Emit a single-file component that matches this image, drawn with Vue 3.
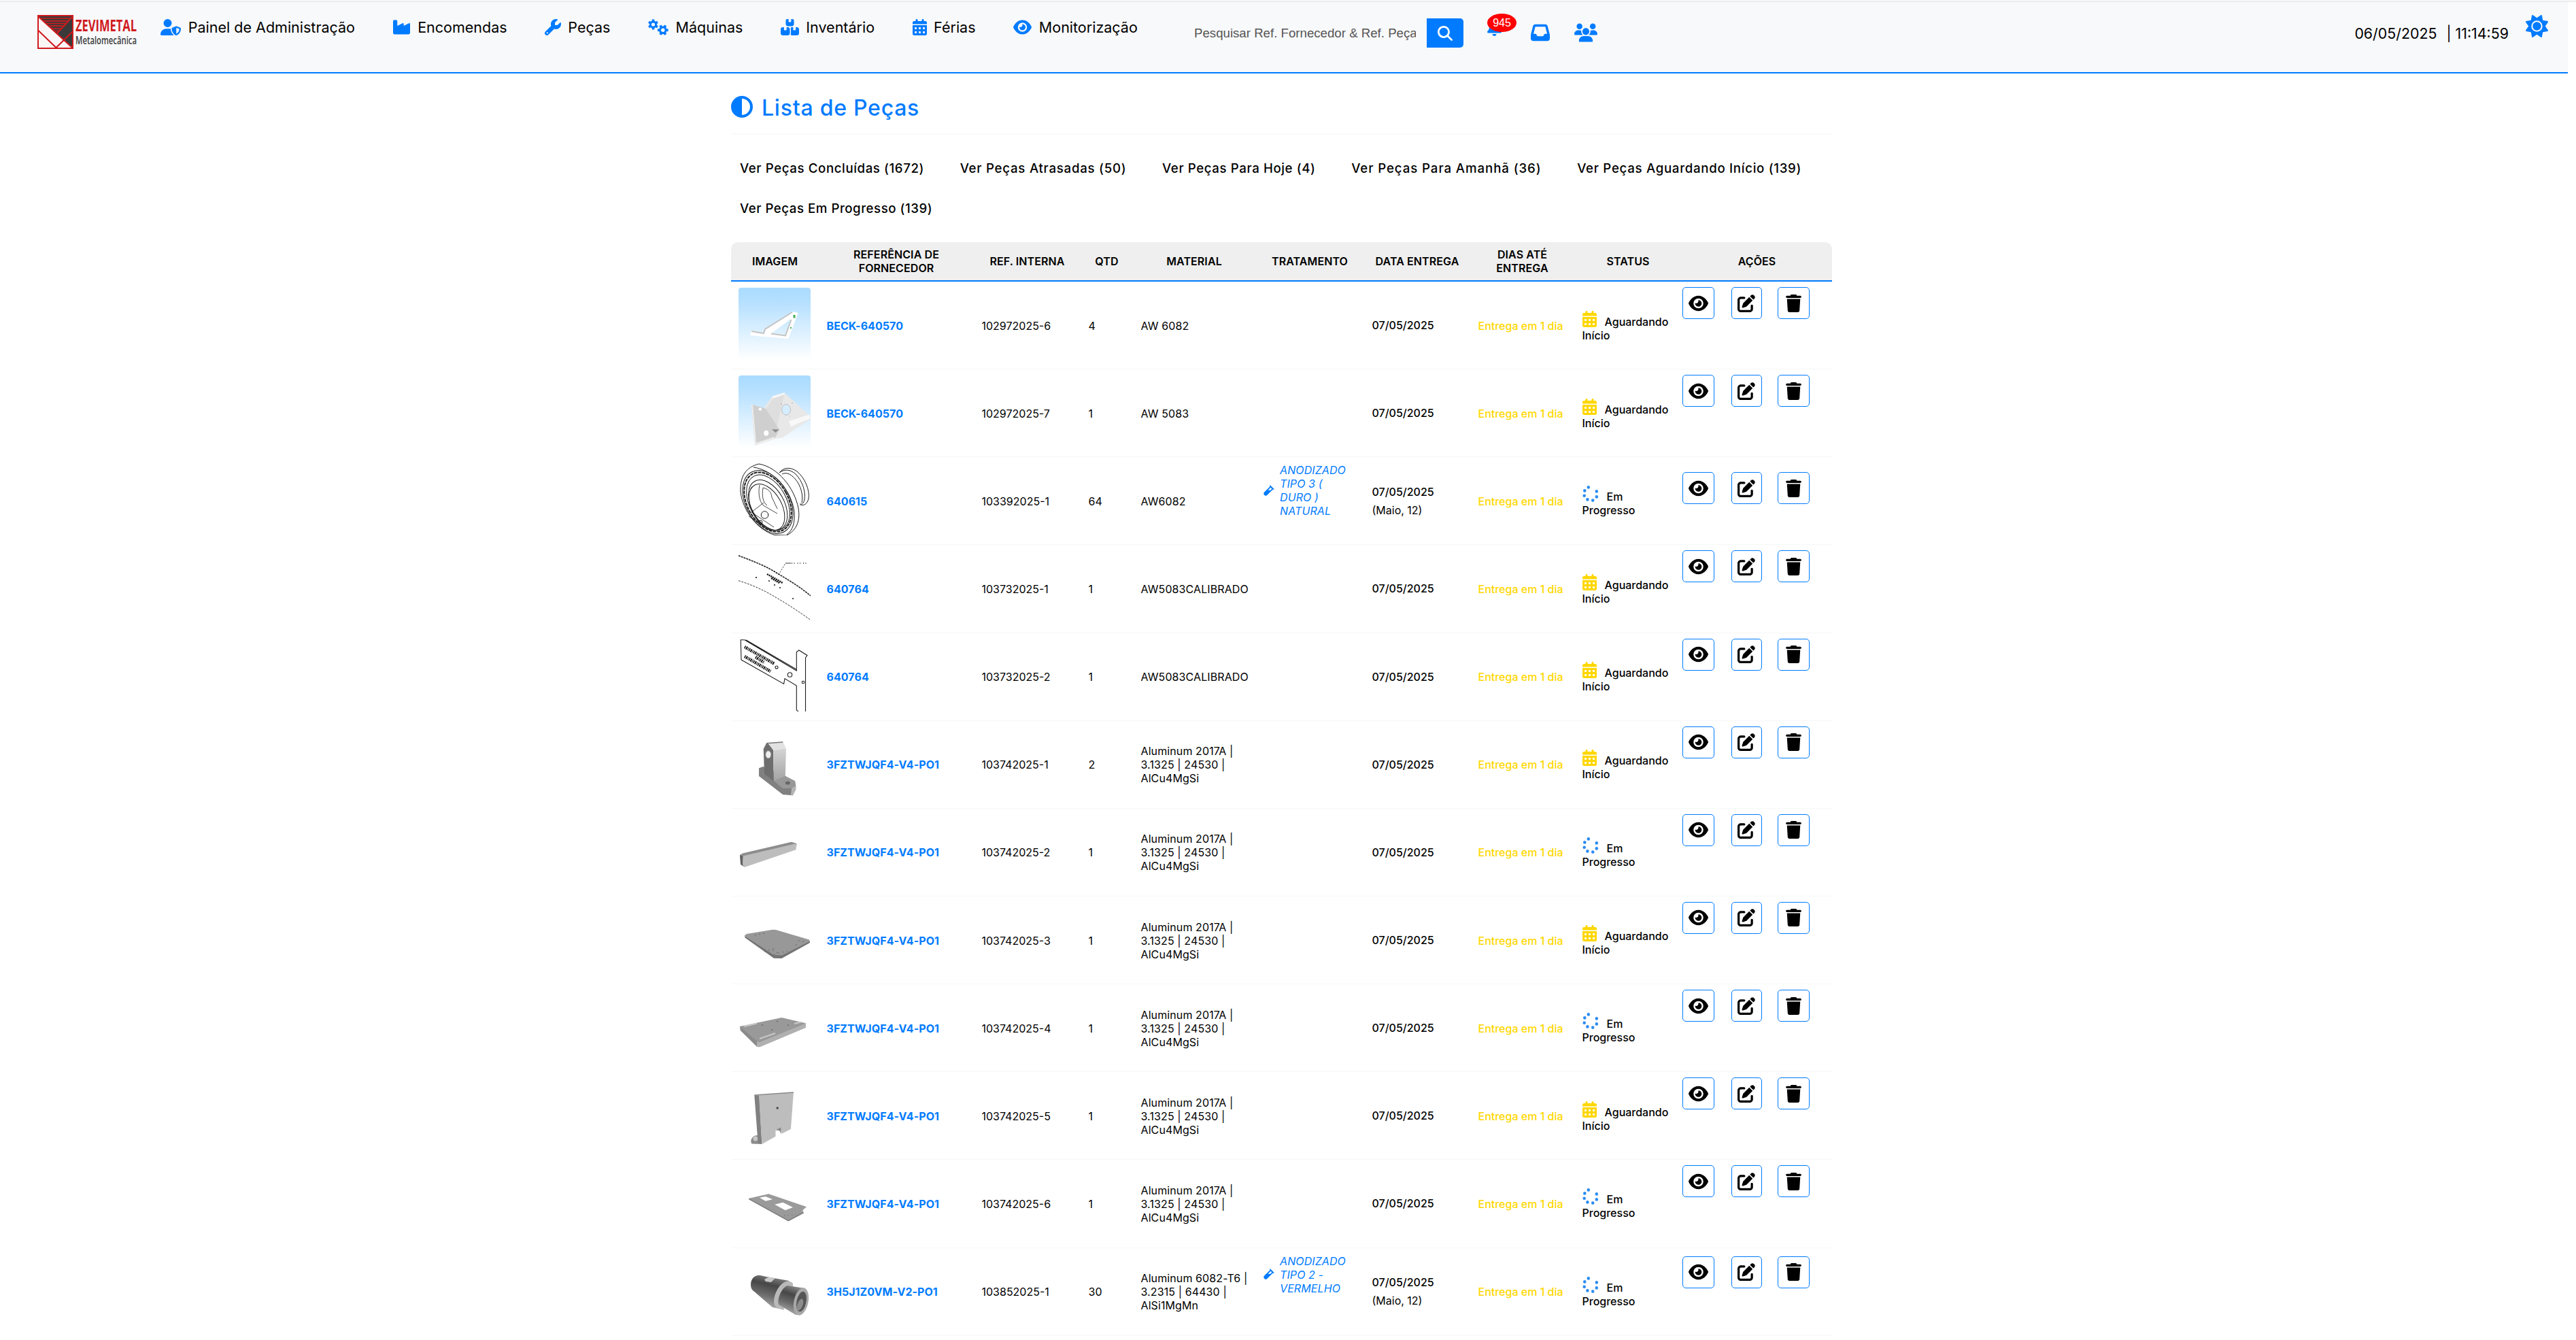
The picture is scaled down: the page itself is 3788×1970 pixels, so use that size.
<script setup>
const gear = (cx, cy, r, rot) => {
  const pts = []
  for (let i = 0; i < 6; i++) {
    const a = rot + (i * Math.PI) / 3
    for (const [d, k] of [[-0.36, 0.72], [-0.22, 1], [0.22, 1], [0.36, 0.72]]) {
      pts.push(`${(cx + r * k * Math.cos(a + d)).toFixed(2)} ${(cy + r * k * Math.sin(a + d)).toFixed(2)}`)
    }
  }
  const h = r * 0.34
  return `M${pts.join('L')}ZM${cx - h} ${cy}a${h} ${h} 0 1 0 ${2 * h} 0a${h} ${h} 0 1 0 ${-2 * h} 0Z`
}

const dot = (x, y, r = 2.3) => `M${12 + x - r} ${12 + y}a${r} ${r} 0 1 0 ${2 * r} 0a${r} ${r} 0 1 0 ${-2 * r} 0Z`

const icons = {
  shield: ['0 0 640 512', 'M224 256A128 128 0 1 0 224 0a128 128 0 1 0 0 256zm-45.7 48C79.8 304 0 383.8 0 482.3C0 498.7 13.3 512 29.7 512H418.3c1.8 0 3.5-.2 5.3-.5c-76.3-55.1-99.8-141-103.1-200.2c-16.1-4.8-33.1-7.3-50.7-7.3H178.3zm308.8-78.3l-120 48C358 277.4 352 286.2 352 296c0 63.3 25.9 168.8 134.8 214.2c5.9 2.5 12.6 2.5 18.5 0C614.1 464.8 640 359.3 640 296c0-9.8-6-18.6-15.1-22.3l-120-48c-5.7-2.3-12.1-2.3-17.8 0zM591.4 312c-3.9 50.7-27.2 116.7-95.4 149.7V273.8L591.4 312z'],
  industry: ['0 0 512 512', 'M32 32C14.3 32 0 46.3 0 64V304v48 80c0 26.5 21.5 48 48 48H464c26.5 0 48-21.5 48-48V304 152.2c0-18.2-19.4-29.7-35.4-21.1L320 215.4V152.2c0-18.2-19.4-29.7-35.4-21.1L128 215.4V64c0-17.7-14.3-32-32-32H32z'],
  wrench: ['0 0 512 512', 'M352 320c88.4 0 160-71.6 160-160c0-15.3-2.2-30.1-6.2-44.2c-3.1-10.8-16.4-13.2-24.3-5.3l-76.8 76.8c-3 3-7.1 4.7-11.3 4.7H336c-8.8 0-16-7.2-16-16V118.6c0-4.2 1.7-8.3 4.7-11.3l76.8-76.8c7.9-7.9 5.4-21.2-5.3-24.3C382.1 2.2 367.3 0 352 0C263.6 0 192 71.6 192 160c0 19.1 3.4 37.5 9.5 54.5L19.9 396.1C7.2 408.8 0 426.1 0 444.1C0 481.6 30.4 512 67.9 512c18 0 35.3-7.2 48-19.9L297.5 310.5c17 6.2 35.4 9.5 54.5 9.5zM80 408a24 24 0 1 1 0 48 24 24 0 1 1 0-48z'],
  gears: ['0 0 30 24', gear(7.5, 8, 7.7, Math.PI / 6) + gear(21.8, 16.2, 8, 0)],
  boxes: ['0 0 576 512', 'M248 0H208c-26.5 0-48 21.5-48 48V160c0 35.3 28.7 64 64 64H352c35.3 0 64-28.7 64-64V48c0-26.5-21.5-48-48-48H328V80c0 8.8-7.2 16-16 16H264c-8.8 0-16-7.2-16-16V0zM64 256c-35.3 0-64 28.7-64 64V448c0 35.3 28.7 64 64 64H224c35.3 0 64-28.7 64-64V320c0-35.3-28.7-64-64-64H184v80c0 8.8-7.2 16-16 16H120c-8.8 0-16-7.2-16-16V256H64zM352 512H512c35.3 0 64-28.7 64-64V320c0-35.3-28.7-64-64-64H472v80c0 8.8-7.2 16-16 16H408c-8.8 0-16-7.2-16-16V256H352c-15 0-28.8 5.1-39.7 13.8c4.9 10.4 7.7 22 7.7 34.2V464c0 12.2-2.8 23.8-7.7 34.2C323.2 506.9 337 512 352 512z'],
  calendar: ['0 0 448 512', 'M128 0c17.7 0 32 14.3 32 32V64H288V32c0-17.7 14.3-32 32-32s32 14.3 32 32V64h48c26.5 0 48 21.5 48 48v48H0V112C0 85.5 21.5 64 48 64H96V32c0-17.7 14.3-32 32-32zM0 192H448V464c0 26.5-21.5 48-48 48H48c-26.5 0-48-21.5-48-48V192zm64 80v32c0 8.8 7.2 16 16 16h32c8.8 0 16-7.2 16-16V272c0-8.8-7.2-16-16-16H80c-8.8 0-16 7.2-16 16zm128 0v32c0 8.8 7.2 16 16 16h32c8.8 0 16-7.2 16-16V272c0-8.8-7.2-16-16-16H208c-8.8 0-16 7.2-16 16zm144-16c-8.8 0-16 7.2-16 16v32c0 8.8 7.2 16 16 16h32c8.8 0 16-7.2 16-16V272c0-8.8-7.2-16-16-16H336zM64 400v32c0 8.8 7.2 16 16 16h32c8.8 0 16-7.2 16-16V400c0-8.8-7.2-16-16-16H80c-8.8 0-16 7.2-16 16zm144-16c-8.8 0-16 7.2-16 16v32c0 8.8 7.2 16 16 16h32c8.8 0 16-7.2 16-16V400c0-8.8-7.2-16-16-16H208zm112 16v32c0 8.8 7.2 16 16 16h32c8.8 0 16-7.2 16-16V400c0-8.8-7.2-16-16-16H336c-8.8 0-16 7.2-16 16z'],
  eye: ['0 0 576 512', 'M288 32c-80.8 0-145.5 36.8-192.6 80.6C48.6 156 17.3 208 2.5 243.7c-3.3 7.9-3.3 16.7 0 24.6C17.3 304 48.6 356 95.4 399.4C142.5 443.2 207.2 480 288 480s145.5-36.8 192.6-80.6c46.8-43.5 78.1-95.4 93-131.1c3.3-7.9 3.3-16.7 0-24.6c-14.9-35.7-46.2-87.7-93-131.1C433.5 68.8 368.8 32 288 32zM144 256a144 144 0 1 1 288 0 144 144 0 1 1 -288 0zm144-64c0 35.3-28.7 64-64 64c-7.1 0-13.9-1.2-20.3-3.3c-5.5-1.8-11.9 1.6-11.7 7.4c.3 6.9 1.3 13.8 3.2 20.7c13.7 51.2 66.4 81.6 117.6 67.9s81.6-66.4 67.9-117.6c-11.1-41.5-47.8-69.4-88.6-71.1c-5.8-.2-9.2 6.1-7.4 11.7c2.1 6.4 3.3 13.2 3.3 20.3z'],
  search: ['0 0 512 512', 'M416 208c0 45.9-14.9 88.3-40 122.7L502.6 457.4c12.5 12.5 12.5 32.8 0 45.3s-32.8 12.5-45.3 0L330.7 376c-34.4 25.2-76.8 40-122.7 40C93.1 416 0 322.9 0 208S93.1 0 208 0S416 93.1 416 208zM208 352a144 144 0 1 0 0-288 144 144 0 1 0 0 288z'],
  bell: ['0 0 448 512', 'M224 0c-17.7 0-32 14.3-32 32V51.2C119 66 64 130.6 64 208v18.8c0 47-17.3 92.4-48.5 127.6l-7.4 8.3c-8.4 9.4-10.4 22.9-5.3 34.4S19.4 416 32 416H416c12.6 0 24-7.4 29.2-18.9s3.1-25-5.3-34.4l-7.4-8.3C401.3 319.2 384 273.9 384 226.8V208c0-77.4-55-142-128-156.8V32c0-17.7-14.3-32-32-32zm45.3 493.3c12-12 18.7-28.3 18.7-45.3H224 160c0 17 6.7 33.3 18.7 45.3s28.3 18.7 45.3 18.7s33.3-6.7 45.3-18.7z'],
  inbox: ['0 0 512 512', 'M121 32C91.6 32 66 52 58.9 80.5L1.9 308.4C.6 313.5 0 318.7 0 323.9V416c0 35.3 28.7 64 64 64H448c35.3 0 64-28.7 64-64V323.9c0-5.2-.6-10.4-1.9-15.5l-57-227.9C446 52 420.4 32 391 32H121zm0 64H391l48 192H387.8c-12.1 0-23.2 6.8-28.6 17.7l-14.3 28.6c-5.4 10.8-16.5 17.7-28.6 17.7H195.8c-12.1 0-23.2-6.8-28.6-17.7l-14.3-28.6c-5.4-10.8-16.5-17.7-28.6-17.7H73L121 96z'],
  users: ['0 0 640 512', 'M144 0a80 80 0 1 1 0 160A80 80 0 1 1 144 0zM512 0a80 80 0 1 1 0 160A80 80 0 1 1 512 0zM0 298.7C0 239.8 47.8 192 106.7 192h42.7c15.9 0 31 3.5 44.6 9.7c-1.3 7.2-1.9 14.7-1.9 22.3c0 38.2 16.8 72.5 43.3 96c-.2 0-.4 0-.7 0H21.3C9.6 320 0 310.4 0 298.7zM405.3 320c-.2 0-.4 0-.7 0c26.6-23.5 43.3-57.8 43.3-96c0-7.6-.7-15-1.9-22.3c13.6-6.3 28.7-9.7 44.6-9.7h42.7C592.2 192 640 239.8 640 298.7c0 11.8-9.6 21.3-21.3 21.3H405.3zM224 224a96 96 0 1 1 192 0 96 96 0 1 1 -192 0zM128 485.3C128 411.7 187.7 352 261.3 352H378.7C452.3 352 512 411.7 512 485.3c0 14.7-11.9 26.7-26.7 26.7H154.7c-14.7 0-26.7-11.9-26.7-26.7z'],
  sun: ['0 0 512 512', 'M361.5 1.2c5 2.1 8.6 6.6 9.6 11.9L391 121l107.9 19.8c5.3 1 9.8 4.6 11.9 9.6s1.5 10.7-1.6 15.2L446.9 256l62.3 90.3c3.1 4.5 3.7 10.2 1.6 15.2s-6.6 8.6-11.9 9.6L391 391 371.1 498.9c-1 5.3-4.6 9.8-9.6 11.9s-10.7 1.5-15.2-1.6L256 446.9l-90.3 62.3c-4.5 3.1-10.2 3.7-15.2 1.6s-8.6-6.6-9.6-11.9L121 391 13.1 371.1c-5.3-1-9.8-4.6-11.9-9.6s-1.5-10.7 1.6-15.2L65.1 256 2.8 165.7c-3.1-4.5-3.7-10.2-1.6-15.2s6.6-8.6 11.9-9.6L121 121 140.9 13.1c1-5.3 4.6-9.8 9.6-11.9s10.7-1.5 15.2 1.6L256 65.1 346.3 2.8c4.5-3.1 10.2-3.7 15.2-1.6zM160 256a96 96 0 1 1 192 0 96 96 0 1 1 -192 0zm224 0a128 128 0 1 0 -256 0 128 128 0 1 0 256 0z'],
  half: ['0 0 512 512', 'M448 256c0-106-86-192-192-192V448c106 0 192-86 192-192zM0 256a256 256 0 1 1 512 0A256 256 0 1 1 0 256z'],
  edit: ['0 0 512 512', 'M471.6 21.7c-21.9-21.9-57.3-21.9-79.2 0L362.3 51.7l97.9 97.9 30.1-30.1c21.9-21.9 21.9-57.3 0-79.2L471.6 21.7zm-299.2 220c-6.1 6.1-10.8 13.6-13.5 21.9l-29.6 88.8c-2.9 8.6-.6 18.1 5.8 24.6s15.9 8.7 24.6 5.8l88.8-29.6c8.2-2.7 15.7-7.4 21.9-13.5L437.7 172.3 339.7 74.3 172.4 241.7zM96 64C43 64 0 107 0 160V416c0 53 43 96 96 96H352c53 0 96-43 96-96V320c0-17.7-14.3-32-32-32s-32 14.3-32 32v96c0 17.7-14.3 32-32 32H96c-17.7 0-32-14.3-32-32V160c0-17.7 14.3-32 32-32h96c17.7 0 32-14.3 32-32s-14.3-32-32-32H96z'],
  trash: ['0 0 448 512', 'M135.2 17.7L128 32H32C14.3 32 0 46.3 0 64S14.3 96 32 96H416c17.7 0 32-14.3 32-32s-14.3-32-32-32H320l-7.2-14.3C307.4 6.8 296.3 0 284.2 0H163.8c-12.1 0-23.2 6.8-28.6 17.7zM416 128H32L53.2 467c1.6 25.3 22.6 45 47.9 45H346.9c25.3 0 46.3-19.7 47.9-45L416 128z'],
  vial: ['0 0 16 16', 'M9.6 .6a.8 .8 0 0 1 1.1 0L15.4 5.3a.8 .8 0 0 1-1.1 1.1L13.9 6.1 5.6 14.4a2.9 2.9 0 0 1-4-4L9.9 2.1 9.6 1.7a.8 .8 0 0 1 0-1.1zM7.2 7.2H10.6L12.5 5.2 10.8 3.5Z'],
  spinner: ['0 0 24 24', [[-3.2, -9.6], [-8.7, -4.6], [8.8, -3.6], [-9.3, 2.8], [8.8, 4.4], [-4.6, 8.4], [3.2, 9.6]].map(([x, y]) => dot(x, y)).join('')]
}

const nav = [
  ['shield', 30, 40.8, 'Painel de Administração'],
  ['industry', 25, 36.5, 'Encomendas'],
  ['wrench', 24, 34, 'Peças'],
  ['gears', 30, 40.5, 'Máquinas'],
  ['boxes', 27, 37.3, 'Inventário'],
  ['calendar', 21, 31.3, 'Férias'],
  ['eye', 27, 37.6, 'Monitorização']
]

// label, letter-spacing
const tabs = [
  ['Ver Peças Concluídas (1672)', 0.6], ['Ver Peças Atrasadas (50)', 0.75], ['Ver Peças Para Hoje (4)', 0.6],
  ['Ver Peças Para Amanhã (36)', 0.92], ['Ver Peças Aguardando Início (139)', 0.7], ['Ver Peças Em Progresso (139)', 0.53]
]

const heads = ['IMAGEM', 'REFERÊNCIA DE\nFORNECEDOR', 'REF. INTERNA', 'QTD', 'MATERIAL', 'TRATAMENTO', 'DATA ENTREGA', 'DIAS ATÉ\nENTREGA', 'STATUS', 'AÇÕES']

const sky = (id) => `<defs><linearGradient id="${id}" x1="0" y1="0" x2="0" y2="1"><stop offset="0" stop-color="#a9dbff"/><stop offset=".2" stop-color="#b6e0ff"/><stop offset="1" stop-color="#fff"/></linearGradient></defs><rect width="106" height="106" rx="4" fill="url(#${id})"/>`

// Product previews on a 106 × 106 canvas
const thumbs = [
  sky('s1') + '<path fill="#fff" fill-rule="evenodd" d="M79.7 35.3L87.8 37 73.2 75 17.4 70.3 18.5 63 38 66 39 60.3ZM77 46L49 66.5 69.4 70.3Z"/><path fill="none" stroke="#c4c4c4" stroke-width="2" d="M19 64L37 67 39 61 79 36M48 67.5L69 70.5 77.5 47"/><path fill="#3fae55" d="M80.5 40h3v4.500h-3zM76 58h2v2h-2z"/>',
  sky('s2') + '<path fill="#e8e8e8" d="M38.500 46.200L49.600 30.700 67.500 25.200 105.900 60.600V64L64.400 91.600 53.200 93 39 60Z"/><path fill="#f8f8f8" d="M49.600 30.700L67.500 25.200V28L50.500 34ZM74 67L104 57.500 106 63 77 75Z"/><path fill="#dedede" d="M50.500 34L67 28 56 78 40 50Z"/><path fill="#cfcfcf" d="M18.800 42.400L39.800 48.600 60 79.600 53.200 93 24.200 102.700Z"/><path fill="#ededed" d="M18.800 42.400L21 43.500 26 99 53 90V93.500L24.200 102.700Z"/><path fill="#8d8d8d" d="M49 79L60 79.600 54 84Z"/><ellipse cx="70" cy="50.300" rx="6.500" ry="7.800" fill="#d5edff" stroke="#bdbdbd"/><ellipse cx="40.700" cy="84.700" rx="3.500" ry="4" fill="#fff"/><circle cx="31.800" cy="49.600" r="2.200" fill="#fff"/><path fill="none" stroke="#aaa" d="M62 42h2M78 40.500h2M75 60h1"/>',
  '<g fill="none" stroke="#1c1c1c" stroke-width="1"><path d="M60 14C66 6 76 5 86 12 98 22 105 40 103 52 101 60 96 63 91 61M60 14C68 8 76 9 84 16 94 26 99 42 97 53 96 59 93 61 90 60M64 16C72 12 80 18 87 28 93 38 95 49 93 58"/><path fill="#fff" d="M30 1C10 6 2 20 3 42 6 70 28 98 53 105.500L71 106C86 98 91 84 88 66 82 36 58 6 30 1Z"/><path d="M22 6C52 10 78 40 82 72 83 88 80 98 71 105"/><g transform="rotate(-29 43 57)"><ellipse cx="43" cy="57" rx="32" ry="50"/><ellipse cx="43" cy="57" rx="30" ry="47" stroke-width="2" stroke-dasharray="5 1"/><ellipse cx="43" cy="58" rx="27" ry="44"/><ellipse cx="41" cy="61" rx="24" ry="40"/><ellipse cx="38" cy="63" rx="22" ry="37"/></g><path stroke-width=".8" d="M31 32C28 46 32 60 38 63L57 74M36 36C34 48 36 58 42 62M36 36C44 38 48 42 49 50L57 67M19 72L37 58M19 72L52 94M15 78L48 98"/><circle cx="38.500" cy="76" r="5.300"/><circle cx="32" cy="87" r="3"/></g>',
  '<g fill="none" stroke="#222" stroke-width=".9"><path stroke-width="1.600" stroke-dasharray="3 1" d="M0 6.800C22 15 44 24 57.600 33.300 76 44 92 54 106 66"/><path stroke-dasharray="3 1.500" d="M0 43.700C18 49 38 58 51 66 72 78 90 90 106 101.500"/><path stroke-dasharray="2 2" d="M59 35L69 18"/><path d="M69 18h8"/><path stroke-dasharray="1 2.500 1 4" stroke-width="1.600" d="M78 18h25"/></g><path fill="none" stroke="#111" stroke-width="2.500" stroke-dasharray="2 1" d="M42 34L65 47M48 40L60 47"/><path fill="none" stroke="#111" stroke-width="1.600" d="M26 38v2M44 44h2M52 50h2M60 54h2M79 70h2"/>',
  '<g fill="none" stroke="#1c1c1c" stroke-width="1.100"><path d="M4 30L3.200 .8H9L85.300 46V18.500L89 16 101 23.500 98.500 27V106M10.800 .8L85 44M4 30L66.600 65.500 68 57.600 85.300 68V104L88 106"/><circle cx="75.500" cy="52" r="3.200"/><circle cx="95" cy="63" r="1.800"/><circle cx="56" cy="41" r="2"/></g><g fill="none" stroke="#111" stroke-width="4.500" stroke-dasharray="1.500 1 2 1 1 1"><path d="M9 11L53 36"/><path d="M25 26L38 34"/><path d="M9 25L47 47"/></g>',
  '<defs><linearGradient id="g6" x1="0" y1="0" x2="0" y2="1"><stop offset="0" stop-color="#d4d4d4"/><stop offset="1" stop-color="#a4a4a4"/></linearGradient></defs><path fill="#808080" d="M30 60.300L36 58 68.800 72 83 79.300 84.400 88.700 80 100.300 65.300 99.300 30 72Z"/><path fill="#989898" d="M52 79L68.800 72 83 79.300 84.400 86 78 90H65Z"/><path fill="#b5b5b5" d="M78 90L84.400 86V92L80 100.300H77Z"/><path fill="#6e6e6e" d="M36.700 32L41 23.700 45 23 51 33.700 51.900 79.300 38 69Z"/><path fill="url(#g6)" d="M51 33.700L70 31.300 68.800 72 51.900 79.300Z"/><path fill="#e2e2e2" d="M43 23.500L65.300 22 70 31.300 51 33.700Z"/><path stroke="#777" stroke-width="1.500" d="M41 23.700L65.300 22"/><ellipse cx="43.800" cy="40.300" rx="4" ry="5.500" fill="#eee" stroke="#999"/><ellipse cx="72.400" cy="82" rx="3.500" ry="2.600" fill="#666"/>',
  '<path fill="#8d8d8d" d="M1.900 59L6 56.500 77.800 39.700 85.300 42V46L6.300 63Z"/><path fill="#bdbdbd" d="M6.300 60.500L83 42.500 85.300 43.500 84.400 51.300 9.400 76.700 6 73Z"/><path fill="#626262" d="M1.900 59L6.500 61 6 73 9.400 76.700 3 73Z"/>',
  '<path fill="#747474" d="M9.400 48L104.500 56 105 59 63.500 82 51.900 81.700 9.400 51.500Z"/><path fill="#989898" d="M9.400 48L12 46 50 39.700 55 40 104 54.500 104.500 57 64 77.500 52 77 9.600 49.500Z"/><path fill="none" stroke="#6c6c6c" stroke-width="1.500" stroke-dasharray="1.500 5" d="M24 48L42 44M38 72L56 66M52 76L72 71M88 56L100 58M50 70L58 74M84 62L90 60"/>',
  '<path fill="#8a8a8a" d="M1.900 53L98.700 48.300V54.700L30.900 83.300 26.900 82.700 2.800 59Z"/><path fill="#b0b0b0" d="M30.900 76L98.700 48.300V54.700L30.900 83.300 26.900 82.700V75Z"/><path fill="#999" d="M1.900 53L63.500 40 98.700 48.300 30.900 75.500 26.900 74.500Z"/><path stroke="#c9c9c9" stroke-width="2" d="M8 53L27 48.500M31 71L54 63M82 49L92 46.500"/><path fill="none" stroke="#666" stroke-width="1.500" d="M34 51h2M56 45.500h2M48 58h2M72 51h2"/>',
  '<path fill="#8c8c8c" d="M28.600 84C20 84 16 92 19.500 96.500L34.400 97Z"/><circle cx="25" cy="89" r="3.500" fill="#c6c6c6"/><path fill="#808080" d="M23.300 25L30.500 25.500 34.400 97 28.600 95Z"/><path fill="#bdbdbd" d="M30 25L80.900 21 76.900 75 63.500 81.700 62.600 73 54.500 76.500V85.700L34.400 97Z"/><path fill="#858585" d="M54.500 76.500L62.600 72.300V82L60 77Z"/><path stroke="#8a8a8a" stroke-width="1.500" d="M23.300 25L80.900 21"/><circle cx="57.200" cy="44" r="1.700" fill="#444"/>',
  '<path fill="#9a9a9a" fill-rule="evenodd" d="M15.300 47.700L44.300 41.300 100 60.300 94.300 65.300 95.600 68.700 73.300 80.700ZM30.900 46.700L39.800 51.700 50 49.300 39.800 45ZM53.200 56.700L68.800 65.300 80 61 65.300 53.700Z"/><path fill="none" stroke="#7c7c7c" stroke-width="1.600" d="M15.300 48.500L73.300 80.700 95.600 68.700"/><path fill="none" stroke="#707070" stroke-dasharray="1.500 4" d="M67 73L84 72"/>',
  '<defs><linearGradient id="m1" x1=".6" y1="0" x2=".3" y2="1"><stop offset="0" stop-color="#8a8a8a"/><stop offset=".3" stop-color="#474747"/><stop offset=".6" stop-color="#6b6b6b"/><stop offset="1" stop-color="#b5b5b5"/></linearGradient></defs><path fill="url(#m1)" d="M18 45.300C18 37 22 31 30.900 30.700L41 33 73.300 38.700 80 46 62 80.300 50 78 36 66 24 55.500C20 53 18 50 18 45.300Z"/><path fill="#c9c9c9" d="M38 37L44 33.500 54 35 48 41 40 40Z"/><path fill="#b9b9b9" d="M62 80.500C50 80 50 66 56 54 62 41 74 35 80 43L80 50 66 82Z"/><path fill="url(#m1)" d="M59 74C56 66 64 48 72 46L98 50 90 89 84 89Z"/><ellipse cx="92" cy="69.500" rx="10.500" ry="20.500" transform="rotate(12 92 69.500)" fill="#a8a8a8"/><ellipse cx="92.500" cy="69.500" rx="7" ry="15" transform="rotate(12 92 69.500)" fill="#555"/><ellipse cx="90.500" cy="74" rx="4" ry="9" transform="rotate(20 90 74)" fill="#8c8c8c"/>'
]

const alu = 'Aluminum 2017A |\n3.1325 | 24530 |\nAlCu4MgSi'
const rows = [
  { ref: 'BECK-640570', int: '102972025-6', qty: 4, mat: 'AW 6082' },
  { ref: 'BECK-640570', int: '102972025-7', qty: 1, mat: 'AW 5083' },
  { ref: '640615', int: '103392025-1', qty: 64, mat: 'AW6082', tr: 'ANODIZADO\nTIPO 3 (\nDURO )\nNATURAL', run: true, drop: 22 },
  { ref: '640764', int: '103732025-1', qty: 1, mat: 'AW5083CALIBRADO' },
  { ref: '640764', int: '103732025-2', qty: 1, mat: 'AW5083CALIBRADO' },
  { ref: '3FZTWJQF4-V4-PO1', int: '103742025-1', qty: 2, mat: alu },
  { ref: '3FZTWJQF4-V4-PO1', int: '103742025-2', qty: 1, mat: alu, run: true },
  { ref: '3FZTWJQF4-V4-PO1', int: '103742025-3', qty: 1, mat: alu },
  { ref: '3FZTWJQF4-V4-PO1', int: '103742025-4', qty: 1, mat: alu, run: true },
  { ref: '3FZTWJQF4-V4-PO1', int: '103742025-5', qty: 1, mat: alu },
  { ref: '3FZTWJQF4-V4-PO1', int: '103742025-6', qty: 1, mat: alu, run: true },
  { ref: '3H5J1Z0VM-V2-PO1', int: '103852025-1', qty: 30, mat: 'Aluminum 6082-T6 |\n3.2315 | 64430 |\nAlSi1MgMn', tr: 'ANODIZADO\nTIPO 2 -\nVERMELHO', run: true, drop: 12 }
]
const actions = ['eye', 'edit', 'trash']
</script>

<template>
  <div class="page">
    <div class="strip"></div>
    <header class="topbar">
      <svg class="logo" viewBox="0 0 147 50">
        <rect x="1" y="1" width="51" height="48" fill="#fbf6f6" />
        <path fill="#3a3a3a" d="M2 2H51V47L36 35Z" />
        <path fill="#3a3a3a" d="M2 2H51L29 27Z" />
        <path fill="none" stroke="#d01b1e" stroke-width="1.700" d="M5 5H48M9 8.800H44M13 12.500H41M17 16.200H38M21 20H34M24 23.500H32" />
        <path fill="none" stroke="#d01b1e" stroke-width="2" d="M1 2L51 48M51 3L29 27M1 22.500L27.500 48 51 25" />
        <rect x="1" y="1" width="51" height="48" fill="none" stroke="#d01b1e" stroke-width="2" />
        <text x="56" y="24.300" class="l1" textLength="90" lengthAdjust="spacingAndGlyphs">ZEVIMETAL</text>
        <text x="56" y="43" class="l2" textLength="90" lengthAdjust="spacingAndGlyphs">Metalomecânica</text>
      </svg>
      <nav class="nav">
        <a v-for="[ic, w, box, label] in nav" :key="label" class="nav-item">
          <span class="nav-ic" :style="{ width: box + 'px' }">
            <svg :viewBox="icons[ic][0]" :style="{ width: w + 'px' }" preserveAspectRatio="none"><path :d="icons[ic][1]" fill-rule="evenodd" /></svg>
          </span>{{ label }}
        </a>
      </nav>
      <div class="search">
        <div class="field"><span>Pesquisar Ref. Fornecedor &amp; Ref. Peça</span></div>
        <button><svg :viewBox="icons.search[0]"><path :d="icons.search[1]" /></svg></button>
      </div>
      <div class="tools">
        <div class="bell"><svg :viewBox="icons.bell[0]"><path :d="icons.bell[1]" /></svg><span class="badge">945</span></div>
        <svg class="inbox" :viewBox="icons.inbox[0]"><path :d="icons.inbox[1]" fill-rule="evenodd" /></svg>
        <svg class="users" :viewBox="icons.users[0]"><path :d="icons.users[1]" /></svg>
      </div>
      <div class="clock"><span class="day">06/05/2025</span><span>| 11:14:59</span></div>
      <svg class="sun" :viewBox="icons.sun[0]"><path :d="icons.sun[1]" /></svg>
    </header>

    <main class="content">
      <h1><svg :viewBox="icons.half[0]"><path :d="icons.half[1]" /></svg><span>Lista de Peças</span></h1>
      <div class="tabs"><a v-for="[t, ls] in tabs" :key="t" :style="{ letterSpacing: ls + 'px' }">{{ t }}</a></div>
      <div class="table">
        <div class="grid head"><div v-for="h in heads" :key="h">{{ h }}</div></div>
        <div v-for="(r, i) in rows" :key="r.int" class="grid row">
          <div class="thumb"><svg viewBox="0 0 106 106" v-html="thumbs[i]"></svg></div>
          <div class="ref">{{ r.ref }}</div>
          <div>{{ r.int }}</div>
          <div>{{ r.qty }}</div>
          <div class="mat">{{ r.mat }}</div>
          <div class="treat"><template v-if="r.tr"><svg :viewBox="icons.vial[0]"><path :d="icons.vial[1]" fill-rule="evenodd" /></svg><em>{{ r.tr }}</em></template></div>
          <div class="date"><b>07/05/2025</b><span v-if="r.tr">(Maio, 12)</span></div>
          <div class="due">Entrega em 1 dia</div>
          <div class="status" :class="{ run: r.run }">
            <div class="line"><svg :viewBox="icons[r.run ? 'spinner' : 'calendar'][0]"><path :d="icons[r.run ? 'spinner' : 'calendar'][1]" fill-rule="evenodd" /></svg>{{ r.run ? 'Em' : 'Aguardando' }}</div>
            <div>{{ r.run ? 'Progresso' : 'Início' }}</div>
          </div>
          <div class="actions" :style="{ paddingTop: (r.drop || 8) + 'px' }">
            <button v-for="a in actions" :key="a" :class="a"><svg :viewBox="icons[a][0]"><path :d="icons[a][1]" fill-rule="evenodd" /></svg></button>
          </div>
        </div>
      </div>
    </main>
  </div>
</template>

<style>
body { margin: 0; background: #fff; }
</style>

<style scoped>
.page { width: 3788px; height: 1970px; overflow: hidden; font-family: Inter, sans-serif; color: #000; background: #fff; }
.strip { height: 2px; background: #f5f5f5; border-bottom: 1px solid #e8e8e8; }
.topbar { box-sizing: border-box; width: 3776px; height: 105px; display: flex; align-items: flex-start; background: #f8f9fb; border-bottom: 2px solid #007bff; padding-left: 55px; }
svg { display: block; fill: #007bff; flex: none; }
.logo { width: 147px; height: 50px; margin-top: 19px; overflow: visible; }
.logo text { font-family: "Open Sans", sans-serif; }
.l1 { font-size: 24px; font-weight: 700; fill: #d01b1e; }
.l2 { font-size: 16.500px; font-weight: 600; fill: #3f3f3f; }
.nav { display: flex; gap: 55.700px; margin: 22px 0 0 34px; width: 1502px; flex: none; }
.nav-item { display: flex; align-items: center; height: 30px; line-height: 30px; font-size: 21.500px; white-space: nowrap; }
.nav-ic { flex: none; }
.nav-ic svg { height: 24px; }
.search { display: flex; margin-top: 24px; width: 414px; height: 43px; flex: none; }
.field { box-sizing: border-box; width: 360px; padding: 0 16px 0 18px; background: #f8f9fa; }
.field span { display: block; overflow: hidden; white-space: nowrap; font: 18.670px/43px "Liberation Sans", Arial, sans-serif; color: #555; }
.search button { width: 54px; border: 0; padding: 0; background: #007bff; border-radius: 0 5px 5px 0; display: grid; place-items: center; }
.search button svg { width: 22px; fill: #fff; }
.tools { display: flex; margin-left: 35px; flex: none; }
.bell { position: relative; width: 64px; margin-top: 26px; }
.bell svg { width: 21px; height: 24px; }
.badge { position: absolute; left: 0; top: -9px; width: 43px; height: 27px; border-radius: 50%; background: #f00; color: #fff; font: 16px/27px "Liberation Sans", Arial, sans-serif; text-align: center; }
.inbox { width: 28px; height: 28px; margin-top: 31px; }
.users { width: 34px; height: 28px; margin: 31px 0 0 36px; }
.clock { margin: 31px 0 0 auto; display: flex; gap: 14px; font-size: 21.360px; line-height: 30px; white-space: nowrap; }
.sun { width: 33px; height: 33px; margin: 19px 29px 0 25px; }
.content { width: 1619px; margin-left: 1075px; }
h1 { box-sizing: border-box; margin: 0; height: 90px; padding: 10px 0 0; border-bottom: 2px solid #f8f9fa; display: flex; align-items: center; gap: 13px; color: #007bff; font-size: 32px; font-weight: 450; letter-spacing: .75px; }
h1 svg { width: 32px; height: 32px; }
h1 span { padding-top: 3px; }
.tabs { box-sizing: border-box; display: flex; flex-wrap: wrap; column-gap: 52.600px; padding: 20px 0 0 13px; height: 158px; align-content: flex-start; }
.tabs a { font-size: 18.670px; font-weight: 450; line-height: 59px; white-space: nowrap; }
.grid { display: grid; grid-template-columns: 129px 228px 157px 77px 180px 160px 156px 153px 158px 221px; }
.head { box-sizing: border-box; height: 58px; background: #efefef; border-bottom: 2px solid #007bff; border-radius: 10px 10px 0 0; align-items: center; text-align: center; font-weight: 600; font-size: 16px; line-height: 20px; letter-spacing: .1px; white-space: pre; }
.row { box-sizing: border-box; height: 129.150px; border-bottom: 1px solid #f6f7f8; align-items: center; font-size: 16px; line-height: 20px; }
.row > div { padding-left: 11.500px; padding-top: 1px; white-space: pre; }
.row > .thumb { padding: 0 0 4px 11px; }
.thumb svg { width: 106px; height: 106px; }
.ref { color: #007bff; font-weight: 700; letter-spacing: .05px; }
.mat { letter-spacing: .1px; }
.row > .treat { align-self: start; padding-top: 9px; padding-left: 11px; display: flex; align-items: center; gap: 8px; color: #007bff; }
.treat em { letter-spacing: .1px; }
.treat svg { width: 17px; height: 17px; }
.date b, .date span { display: block; line-height: 27px; }
.date b { font-weight: 500; }
.due { color: #ffd700; font-weight: 500; }
.row > .status { align-self: start; padding-top: 48.500px; font-weight: 500; }
.line { display: flex; height: 20px; align-items: center; gap: 12px; }
.line svg { width: 21px; height: 24px; fill: #ffd700; margin-bottom: 8px; }
.row > .run { padding-top: 48px; }
.run .line svg { width: 24px; fill: #2a8cf0; }
.row > .actions { align-self: start; display: flex; padding-left: 1px; }
.actions button { box-sizing: border-box; width: 47px; height: 47px; padding: 0; margin-right: 24.500px; border: 1.500px solid #007bff; border-radius: 5px; background: #fff; display: grid; place-items: center; }
.actions .edit { width: 45px; margin-right: 23.500px; }
.actions svg { fill: #000; height: 26px; width: 26px; }
.actions .eye svg { width: 29px; }
.actions .trash svg { width: 23px; }
</style>
